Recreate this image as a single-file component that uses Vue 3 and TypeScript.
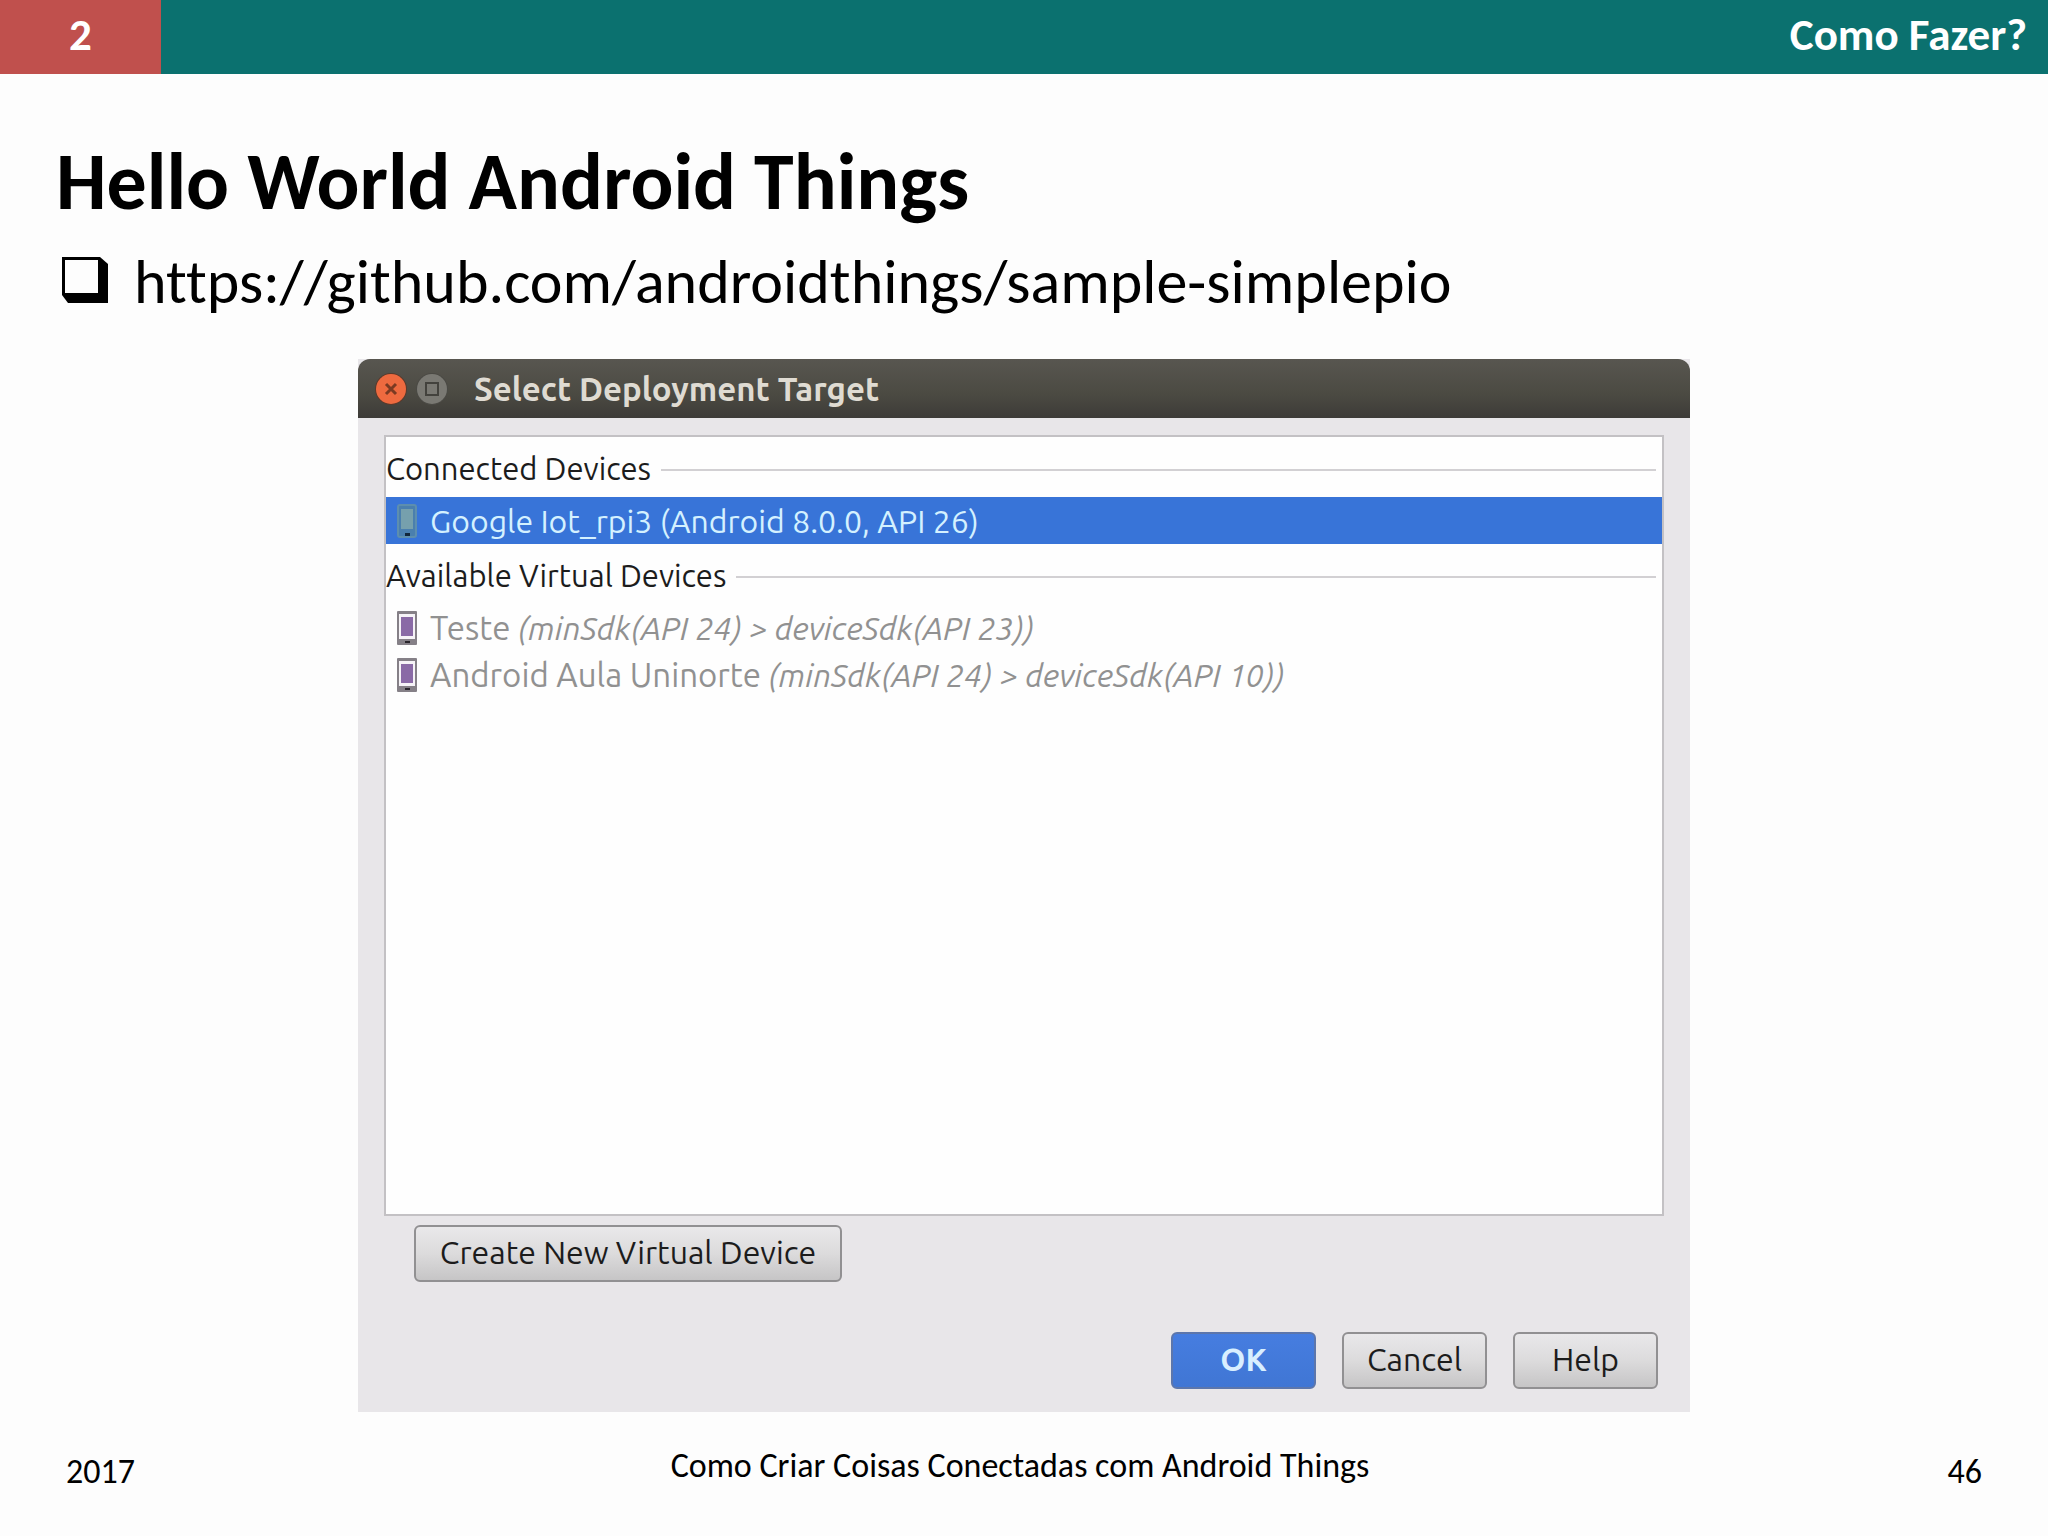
<script setup lang="ts">
import { ref } from 'vue'

interface Device {
  id: string
  name: string
  note?: string
}

interface Group {
  title: string
  devices: Device[]
}

const groups: Group[] = [
  {
    title: 'Connected Devices',
    devices: [{ id: 'rpi3', name: 'Google Iot_rpi3 (Android 8.0.0, API 26)' }],
  },
  {
    title: 'Available Virtual Devices',
    devices: [
      { id: 'teste', name: 'Teste', note: '(minSdk(API 24) > deviceSdk(API 23))' },
      { id: 'uninorte', name: 'Android Aula Uninorte', note: '(minSdk(API 24) > deviceSdk(API 10))' },
    ],
  },
]

const selected = ref('rpi3')
</script>

<template>
  <div class="slide">
    <header class="bar">
      <span class="bar-number">2</span>
      <span class="bar-title">Como Fazer?</span>
    </header>

    <main>
      <h1>Hello World Android Things</h1>
      <ul class="bullets">
        <li>
          <svg class="bullet" viewBox="0 0 46 46" aria-hidden="true">
            <path d="M0 0H38L46 7V46H6L0 38Z" />
            <path d="M3 3H36V36H3Z" fill="#fdfdfd" />
          </svg>
          <a href="https://github.com/androidthings/sample-simplepio">https://github.com/androidthings/sample-simplepio</a>
        </li>
      </ul>

      <section class="dialog" aria-labelledby="dialog-title">
        <div class="titlebar">
          <button class="window-button" type="button" aria-label="Close">
            <svg viewBox="0 0 34 34">
              <circle cx="17" cy="17" r="16" fill="#5b3a2c" />
              <circle cx="17" cy="17" r="15" fill="#ee6a3f" />
              <path d="M12 12L22 22M22 12L12 22" stroke="#7c3a22" stroke-width="3" />
            </svg>
          </button>
          <button class="window-button" type="button" aria-label="Maximize">
            <svg viewBox="0 0 34 34">
              <circle cx="17" cy="17" r="16" fill="#4b4a45" />
              <circle cx="17" cy="17" r="15" fill="#7a7973" />
              <rect x="11" y="11" width="12" height="12" fill="none" stroke="#43423d" stroke-width="2" />
            </svg>
          </button>
          <h2 id="dialog-title">Select Deployment Target</h2>
        </div>

        <div class="body">
          <div class="devices">
            <section v-for="group in groups" :key="group.title">
              <h3>{{ group.title }}</h3>
              <ul role="listbox" :aria-label="group.title">
                <li
                  v-for="device in group.devices"
                  :key="device.id"
                  class="device"
                  :class="{ selected: device.id === selected, disabled: device.note }"
                  role="option"
                  :aria-selected="device.id === selected"
                >
                  <svg v-if="device.note" class="phone" viewBox="0 0 20 34" aria-hidden="true">
                    <rect width="20" height="34" rx="1" fill="#858087" />
                    <rect x="2" y="3" width="16" height="25" fill="#f6f3f7" />
                    <rect x="4" y="6" width="12" height="19" fill="#8a6aa6" />
                    <rect x="8" y="30" width="5" height="2" fill="#29252b" />
                  </svg>
                  <svg v-else class="phone" viewBox="0 0 20 34" aria-hidden="true">
                    <rect x="1" y="1" width="18" height="32" rx="2" fill="#4a7fae" stroke="#5d8eae" stroke-width="2" />
                    <rect x="4" y="5" width="12" height="20" fill="#76a0ad" />
                    <rect x="8" y="29" width="5" height="3" fill="#12263a" />
                  </svg>
                  <span>{{ device.name }} <em v-if="device.note">{{ device.note }}</em></span>
                </li>
              </ul>
            </section>
          </div>
          <button class="button create" type="button">Create New Virtual Device</button>
          <div class="actions">
            <button class="button primary" type="button">OK</button>
            <button class="button" type="button">Cancel</button>
            <button class="button" type="button">Help</button>
          </div>
        </div>
      </section>
    </main>

    <footer>
      <span>2017</span>
      <span class="footer-title">Como Criar Coisas Conectadas com Android Things</span>
      <span class="footer-page">46</span>
    </footer>
  </div>
</template>

<style>
body {
  margin: 0;
  background: #fdfdfd;
}
</style>

<style scoped>
.slide {
  min-height: 100vh;
  color: #000;
  font-family: Carlito, Calibri, Lato, sans-serif;
  font-variant-ligatures: none;
}

h1,
h2,
h3,
ul {
  margin: 0;
  padding: 0;
  list-style: none;
}

.bar {
  display: flex;
  height: 74px;
  color: #fff;
  background: #0b716f;
  font-size: 45px;
  font-weight: 700;
  line-height: 70px;
}

.bar-number {
  width: 161px;
  background: #c0504d;
  text-align: center;
}

.bar-title {
  margin-left: auto;
  padding-right: 21px;
}

h1 {
  padding: 60px 56px 0;
  font-size: 80px;
  line-height: 96px;
}

.bullets {
  padding: 14px 62px 39px;
  font-size: 62px;
  line-height: 76px;
}

.bullets li {
  display: flex;
  align-items: center;
  gap: 26px;
}

.bullets a {
  color: inherit;
  text-decoration: none;
}

.bullet {
  width: 46px;
  height: 46px;
  margin-bottom: 4px;
}

.dialog {
  max-width: 1332px;
  margin: 0 auto;
  background: #e8e6e9;
  font-family: Ubuntu, "Noto Sans", sans-serif;
  font-size: 32px;
}

.titlebar {
  display: flex;
  align-items: center;
  gap: 7px;
  height: 59px;
  padding-left: 16px;
  border-radius: 12px 12px 0 0;
  background: linear-gradient(#585650, #4b4a42 60%, #3d3b38);
}

.window-button {
  width: 34px;
  height: 34px;
  padding: 0;
  border: 0;
  background: none;
}

.window-button svg {
  display: block;
}

h2 {
  margin-left: 18px;
  color: #dfdbd2;
  font-size: 33px;
  line-height: 40px;
}

.body {
  display: flex;
  flex-direction: column;
  padding: 17px 26px 23px;
}

.devices {
  box-sizing: border-box;
  min-height: 781px;
  border: 2px solid #c3c1c4;
  background: #fefefe;
}

h3 {
  display: flex;
  align-items: center;
  gap: 10px;
  box-sizing: border-box;
  height: 60px;
  padding: 2px 6px 0 0;
  color: #1c1c1c;
  font-size: 31px;
  font-weight: 400;
}

h3::after {
  flex: 1;
  height: 2px;
  margin-top: 4px;
  background: #d2d0d3;
  content: "";
}

.device {
  display: flex;
  align-items: center;
  gap: 13px;
  height: 47px;
  padding-left: 11px;
  white-space: nowrap;
}

.selected {
  color: #d4f1ff;
  background: #3874d8;
}

.disabled {
  color: #919191;
  font-size: 33px;
}

.device em {
  font-size: 32px;
}

.phone {
  width: 20px;
  height: 34px;
}

.button {
  box-sizing: border-box;
  width: 145px;
  height: 57px;
  padding: 0 0 4px;
  border: 2px solid #919092;
  border-radius: 6px;
  color: #1c1c1c;
  background: linear-gradient(#e9e8ea, #dcdbdc 50%, #c6c5c6);
  font: inherit;
}

.create {
  width: 428px;
  margin: 9px 0 50px 30px;
}

.primary {
  border-color: #5c76ac;
  color: #d8efff;
  background: linear-gradient(#467de0, #4076d4);
  font-weight: 700;
}

.actions {
  display: flex;
  justify-content: flex-end;
  gap: 26px;
  padding-right: 6px;
}

footer {
  display: grid;
  grid-template-columns: 1fr auto 1fr;
  align-items: center;
  padding: 34px 66px;
  font-size: 34px;
  line-height: 40px;
}

footer span {
  padding-top: 6px;
}

footer .footer-title {
  padding: 0 8px 6px 0;
}

.footer-page {
  text-align: right;
}
</style>
